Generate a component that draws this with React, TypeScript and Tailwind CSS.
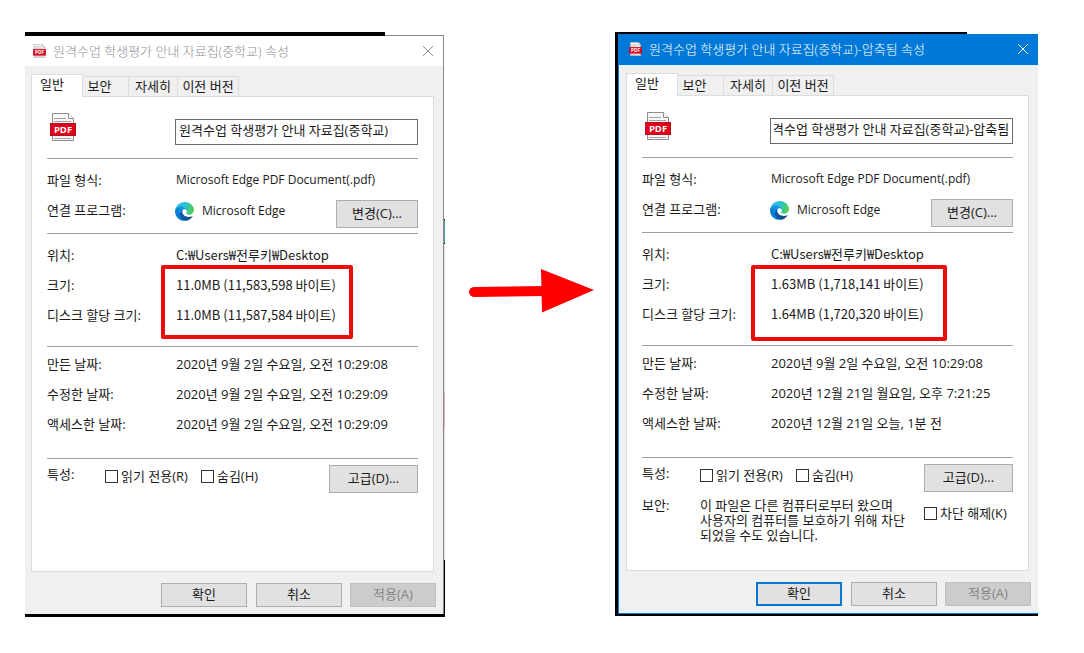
import { useEffect, useId, useRef } from "react";

type Row = { label: string; value: string };

type FileInfo = {
  title: string;
  name: string;
  active: boolean;
  sizes: Row[];
  dates: Row[];
  blocked: boolean;
};

const original: FileInfo = {
  title: "원격수업 학생평가 안내 자료집(중학교) 속성",
  name: "원격수업 학생평가 안내 자료집(중학교)",
  active: false,
  sizes: [
    { label: "크기:", value: "11.0MB (11,583,598 바이트)" },
    { label: "디스크 할당 크기:", value: "11.0MB (11,587,584 바이트)" },
  ],
  dates: [
    { label: "만든 날짜:", value: "2020년 9월 2일 수요일, 오전 10:29:08" },
    { label: "수정한 날짜:", value: "2020년 9월 2일 수요일, 오전 10:29:09" },
    { label: "액세스한 날짜:", value: "2020년 9월 2일 수요일, 오전 10:29:09" },
  ],
  blocked: false,
};

const compressed: FileInfo = {
  title: "원격수업 학생평가 안내 자료집(중학교)-압축됨 속성",
  name: "원격수업 학생평가 안내 자료집(중학교)-압축됨",
  active: true,
  sizes: [
    { label: "크기:", value: "1.63MB (1,718,141 바이트)" },
    { label: "디스크 할당 크기:", value: "1.64MB (1,720,320 바이트)" },
  ],
  dates: [
    { label: "만든 날짜:", value: "2020년 9월 2일 수요일, 오전 10:29:08" },
    { label: "수정한 날짜:", value: "2020년 12월 21일 월요일, 오후 7:21:25" },
    { label: "액세스한 날짜:", value: "2020년 12월 21일 오늘, 1분 전" },
  ],
  blocked: true,
};

function PdfIcon({ className }: { className: string }) {
  return (
    <svg viewBox="0 0 26 28" className={className} aria-hidden="true">
      <path d="M2.500 .5h16l5 5v22h-21z" fill="#f7f7f7" stroke="#8d8d8d" />
      <path d="M18.500 .5v5h5" fill="#fff" stroke="#8d8d8d" />
      <path d="M4 5.500h12M4 8.500h17M4 25.500h17" stroke="#a3a3a3" />
      <rect x="0.500" y="10.500" width="25" height="12" fill="#e2001a" stroke="#b5121f" />
      <text x="13" y="20" textAnchor="middle" fontSize="9.500" fontWeight="700" fill="#fff" fontFamily="Open Sans, sans-serif">
        PDF
      </text>
    </svg>
  );
}

function EdgeIcon() {
  const id = useId();
  return (
    <svg viewBox="0 0 256 256" className="h-[19px] w-[19px] shrink-0" aria-hidden="true">
      <defs>
        <linearGradient id={`${id}a`} x1="63" y1="177" x2="241" y2="177" gradientUnits="userSpaceOnUse">
          <stop offset="0" stopColor="#0c59a4" />
          <stop offset="1" stopColor="#114a8b" />
        </linearGradient>
        <linearGradient id={`${id}b`} x1="157" y1="96" x2="46" y2="218" gradientUnits="userSpaceOnUse">
          <stop offset="0" stopColor="#1b9de2" />
          <stop offset="0.67" stopColor="#0680d7" />
          <stop offset="1" stopColor="#0078d4" />
        </linearGradient>
        <linearGradient id={`${id}c`} x1="20" y1="50" x2="240" y2="120" gradientUnits="userSpaceOnUse">
          <stop offset="0" stopColor="#35b8f1" />
          <stop offset="0.5" stopColor="#2bc3d2" />
          <stop offset="1" stopColor="#4fd04b" />
        </linearGradient>
      </defs>
      <path
        fill={`url(#${id}a)`}
        d="M231 190.500c-3.400 1.800-6.900 3.400-10.500 4.700a101.100 101.100 0 0 1-35.500 6.400c-46.800 0-87.500-32.200-87.500-73.500 0-11.300 6.100-21.700 15.900-27.200-42.300 1.800-53.200 45.900-53.200 71.700 0 73.100 67.400 80.500 81.900 80.500 7.800 0 19.600-2.300 26.700-4.500l1.300-.4a127.800 127.800 0 0 0 66.600-52.800 4 4 0 0 0-5.700-4.900z"
      />
      <path
        fill={`url(#${id}b)`}
        d="M105.700 241.400c-8.800-5.500-16.400-12.600-22.400-21.100a80 80 0 0 1 29.500-120c3.100-1.500 8.500-4.100 15.600-4 10.100.1 19.700 5 25.800 13.100 4.100 5.400 6.300 11.900 6.400 18.700 0-.2 24.500-79.600-80-79.600-43.900 0-80 41.700-80 78.200-.2 19.300 4 38.500 12.100 56 27.600 58.800 94.800 87.600 156.400 67.100-21.100 6.700-44.100 3.600-62.900-8.400z"
      />
      <path
        fill={`url(#${id}c)`}
        d="M152.300 148.900c-.8 1-3.300 2.500-3.300 5.700 0 2.600 1.700 5.100 4.700 7.200 14.400 10 41.500 8.700 41.600 8.700 10.700 0 21.100-2.900 30.300-8.300A61.400 61.400 0 0 0 256 109.300c.3-22.400-8-37.300-11.300-43.900C223.500 23.900 177.700 0 128 0A128 128 0 0 0 0 126.200c.5-36.500 36.800-66 80-66 3.500 0 23.500.3 42 10.100 16.300 8.600 24.900 18.900 30.800 29.200 6.200 10.700 7.300 24.100 7.300 29.500 0 5.300-2.700 13.300-7.800 19.900z"
      />
    </svg>
  );
}

function Check({ label }: { label: string }) {
  return (
    <label className="flex h-[15px] items-center gap-[3px] whitespace-nowrap">
      <input type="checkbox" className="h-[13px] w-[13px] shrink-0 appearance-none border border-[#333] bg-white checked:bg-[#0078d7]" />
      <span className="pb-[2px]">{label}</span>
    </label>
  );
}

function Rows({ rows, compact = false }: { rows: Row[]; compact?: boolean }) {
  return (
    <>
      {rows.map((row) => (
        <div key={row.label} className="grid h-[30px] grid-cols-[129px_1fr] items-center whitespace-nowrap">
          <dt>{row.label}</dt>
          <dd className={compact ? "font-['Noto_Sans_CJK_KR',sans-serif]" : undefined}>{row.value}</dd>
        </div>
      ))}
    </>
  );
}

const pushButton = "flex items-center justify-center border border-[#adadad] bg-[#e1e1e1] pb-[2px]";

function PropertiesDialog({ file }: { file: FileInfo }) {
  const nameRef = useRef<HTMLInputElement>(null);

  useEffect(() => {
    if (nameRef.current) nameRef.current.scrollLeft = nameRef.current.scrollWidth;
  }, []);

  return (
    <section
      className={
        file.active
          ? "flex flex-col border-b border-l border-[#0078d7] bg-[#f0f0f0]"
          : "flex flex-col border-t border-r border-[#8a8a8a] bg-[#f0f0f0]"
      }
    >
      <header
        className={
          file.active
            ? "flex h-[31px] items-center bg-[#0078d7] pr-[7px] pb-px pl-[10px] text-white"
            : "flex h-[30px] items-center bg-white pr-[7px] pb-px pl-2 text-[#8f8f8f]"
        }
      >
        <PdfIcon className="h-[14px] w-[13px] shrink-0" />
        <h2 className="ml-[7px] flex-1 font-light whitespace-nowrap">{file.title}</h2>
        <button aria-label="닫기" className="flex h-4 w-4 items-center justify-center">
          <svg viewBox="0 0 12 12" className="h-3 w-3" stroke="currentColor" fill="none">
            <path d="M1 1l10 10M11 1L1 11" />
          </svg>
        </button>
      </header>

      <div className={file.active ? "pt-2 pr-[9px] pl-[7px]" : "pt-2 pr-[9px] pl-[6px]"}>
        <div role="tablist" className="flex items-end leading-4">
          <button role="tab" aria-selected="true" className="relative -mb-px h-[23px] w-[52px] border border-b-0 border-[#dcdcdc] bg-white pr-[10px] pb-1">
            일반
          </button>
          <button role="tab" aria-selected="false" className="h-[20px] w-[45px] border-t border-[#dcdcdc] pr-3 pb-[2px]">
            보안
          </button>
          <button role="tab" aria-selected="false" className="h-[20px] w-[49px] border-t border-l border-[#dcdcdc] pb-[2px]">
            자세히
          </button>
          <button role="tab" aria-selected="false" className="h-[20px] w-[62px] border-t border-r border-l border-[#dcdcdc] pb-[2px] whitespace-nowrap">
            이전 버전
          </button>
        </div>

        <div role="tabpanel" className="min-h-[476px] border border-[#dcdcdc] bg-white px-[15px]">
          <div className="grid h-[61px] grid-cols-[128px_1fr]">
            <PdfIcon className="mt-4 ml-[3px] h-[28px] w-[26px]" />
            <input
              ref={nameRef}
              aria-label="파일 이름"
              defaultValue={file.name}
              className="mt-[22px] h-[26px] w-full min-w-0 border border-[#6b6b6b] bg-white px-[3px] pb-[6px]"
            />
          </div>

          <dl className="border-t border-[#a0a0a0] pt-[6px] pb-[5px]">
            <div className="grid h-[30px] grid-cols-[129px_1fr] items-center whitespace-nowrap">
              <dt>파일 형식:</dt>
              <dd className="text-xs">Microsoft Edge PDF Document(.pdf)</dd>
            </div>
            <div className="grid h-[33px] grid-cols-[128px_1fr_auto] items-start whitespace-nowrap">
              <dt className="leading-[30px]">연결 프로그램:</dt>
              <dd className="flex h-[32px] items-center gap-2 text-xs">
                <EdgeIcon />
                Microsoft Edge
              </dd>
              <dd className="self-end">
                <button className={`${pushButton} h-[28px] w-[82px]`}>변경(C)...</button>
              </dd>
            </div>
          </dl>

          <dl className="border-t border-[#a0a0a0] pt-[6px] pb-4">
            <Rows compact rows={[{ label: "위치:", value: "C:₩Users₩전루키₩Desktop" }]} />
            <div className="relative">
              <Rows compact rows={file.sizes} />
              <div
                aria-hidden="true"
                className={
                  file.active
                    ? "pointer-events-none absolute -top-1 left-[109px] h-[76px] w-[196px] rounded-xs border-4 border-[#ec0c0c]"
                    : "pointer-events-none absolute -top-[5px] left-[114px] h-[74px] w-[192px] rounded-xs border-4 border-[#ec0c0c]"
                }
              />
            </div>
          </dl>

          <dl className="border-t border-[#a0a0a0] pt-[2px] pb-[19px]">
            <Rows rows={file.dates} />
          </dl>

          <div className="border-t border-[#a0a0a0] pt-[6px]">
            <div className="flex items-start">
              <span className="w-[58px] leading-[18px]">특성:</span>
              <div className="flex flex-1 gap-[13px] pt-1">
                <Check label="읽기 전용(R)" />
                <Check label="숨김(H)" />
              </div>
              <button className={`${pushButton} h-[28px] w-[89px]`}>고급(D)...</button>
            </div>
            {file.blocked && (
              <div className="flex items-start pt-[6px]">
                <span className="w-[58px] leading-[15px]">보안:</span>
                <p className="flex-1 leading-[15px] whitespace-nowrap">
                  이 파일은 다른 컴퓨터로부터 왔으며
                  <br />
                  사용자의 컴퓨터를 보호하기 위해 차단
                  <br />
                  되었을 수도 있습니다.
                </p>
                <div className="w-[89px] pt-2">
                  <Check label="차단 해제(K)" />
                </div>
              </div>
            )}
          </div>
        </div>
      </div>

      <footer className="flex justify-end gap-2 pt-[11px] pr-[7px] pb-[7px]">
        <button
          className={
            file.active
              ? "mr-px h-[24px] w-[86px] border-2 border-[#0078d7] bg-[#e1e1e1] pb-[2px] leading-[18px]"
              : "mr-px h-[24px] w-[86px] border border-[#adadad] bg-[#e1e1e1] pb-[2px]"
          }
        >
          확인
        </button>
        <button className={`${pushButton} h-[24px] w-[86px]`}>취소</button>
        <button disabled className="h-[24px] w-[86px] border border-[#bfbfbf] bg-[#cccccc] pb-[2px] text-[#838383]">
          적용(A)
        </button>
      </footer>
    </section>
  );
}

export default function App() {
  return (
    <main className="grid min-h-screen grid-cols-[420fr_170fr_423fr] items-start bg-white pt-8 pr-[46px] pb-9 pl-[25px] font-['Open_Sans','Noto_Sans_CJK_KR',sans-serif] text-[13px] leading-5 text-[#1a1a1a]">
      <div className="relative border-b-[3px] border-black pt-[3px] pr-px">
        <div className="absolute top-0 left-0 h-1 w-[360px] bg-black" />
        <PropertiesDialog file={original} />
        <div className="absolute top-[187px] right-0 h-[25px] w-px border-y border-black bg-[#4f9a9c]" />
        <div className="absolute top-[212px] right-0 h-[316px] w-px bg-[#ecd9e6]" />
        <div className="absolute top-[359px] right-0 h-[37px] w-px bg-[#d9b3cf]" />
        <div className="absolute right-0 bottom-0 h-[54px] w-px bg-black" />
      </div>

      <svg viewBox="0 0 170 60" className="mt-[228px] h-[60px] w-full" role="img" aria-label="압축 전에서 압축 후로">
        <path d="M29 32L100 31" stroke="#fe0000" strokeWidth="10" strokeLinecap="round" />
        <path d="M96 9L149 30L97 52.500Z" fill="#fe0000" />
      </svg>

      <div className="relative border-b-2 border-l-[3px] border-black pt-[2px]">
        <div className="absolute top-0 left-0 h-[2px] w-[349px] bg-black" />
        <PropertiesDialog file={compressed} />
      </div>
    </main>
  );
}
